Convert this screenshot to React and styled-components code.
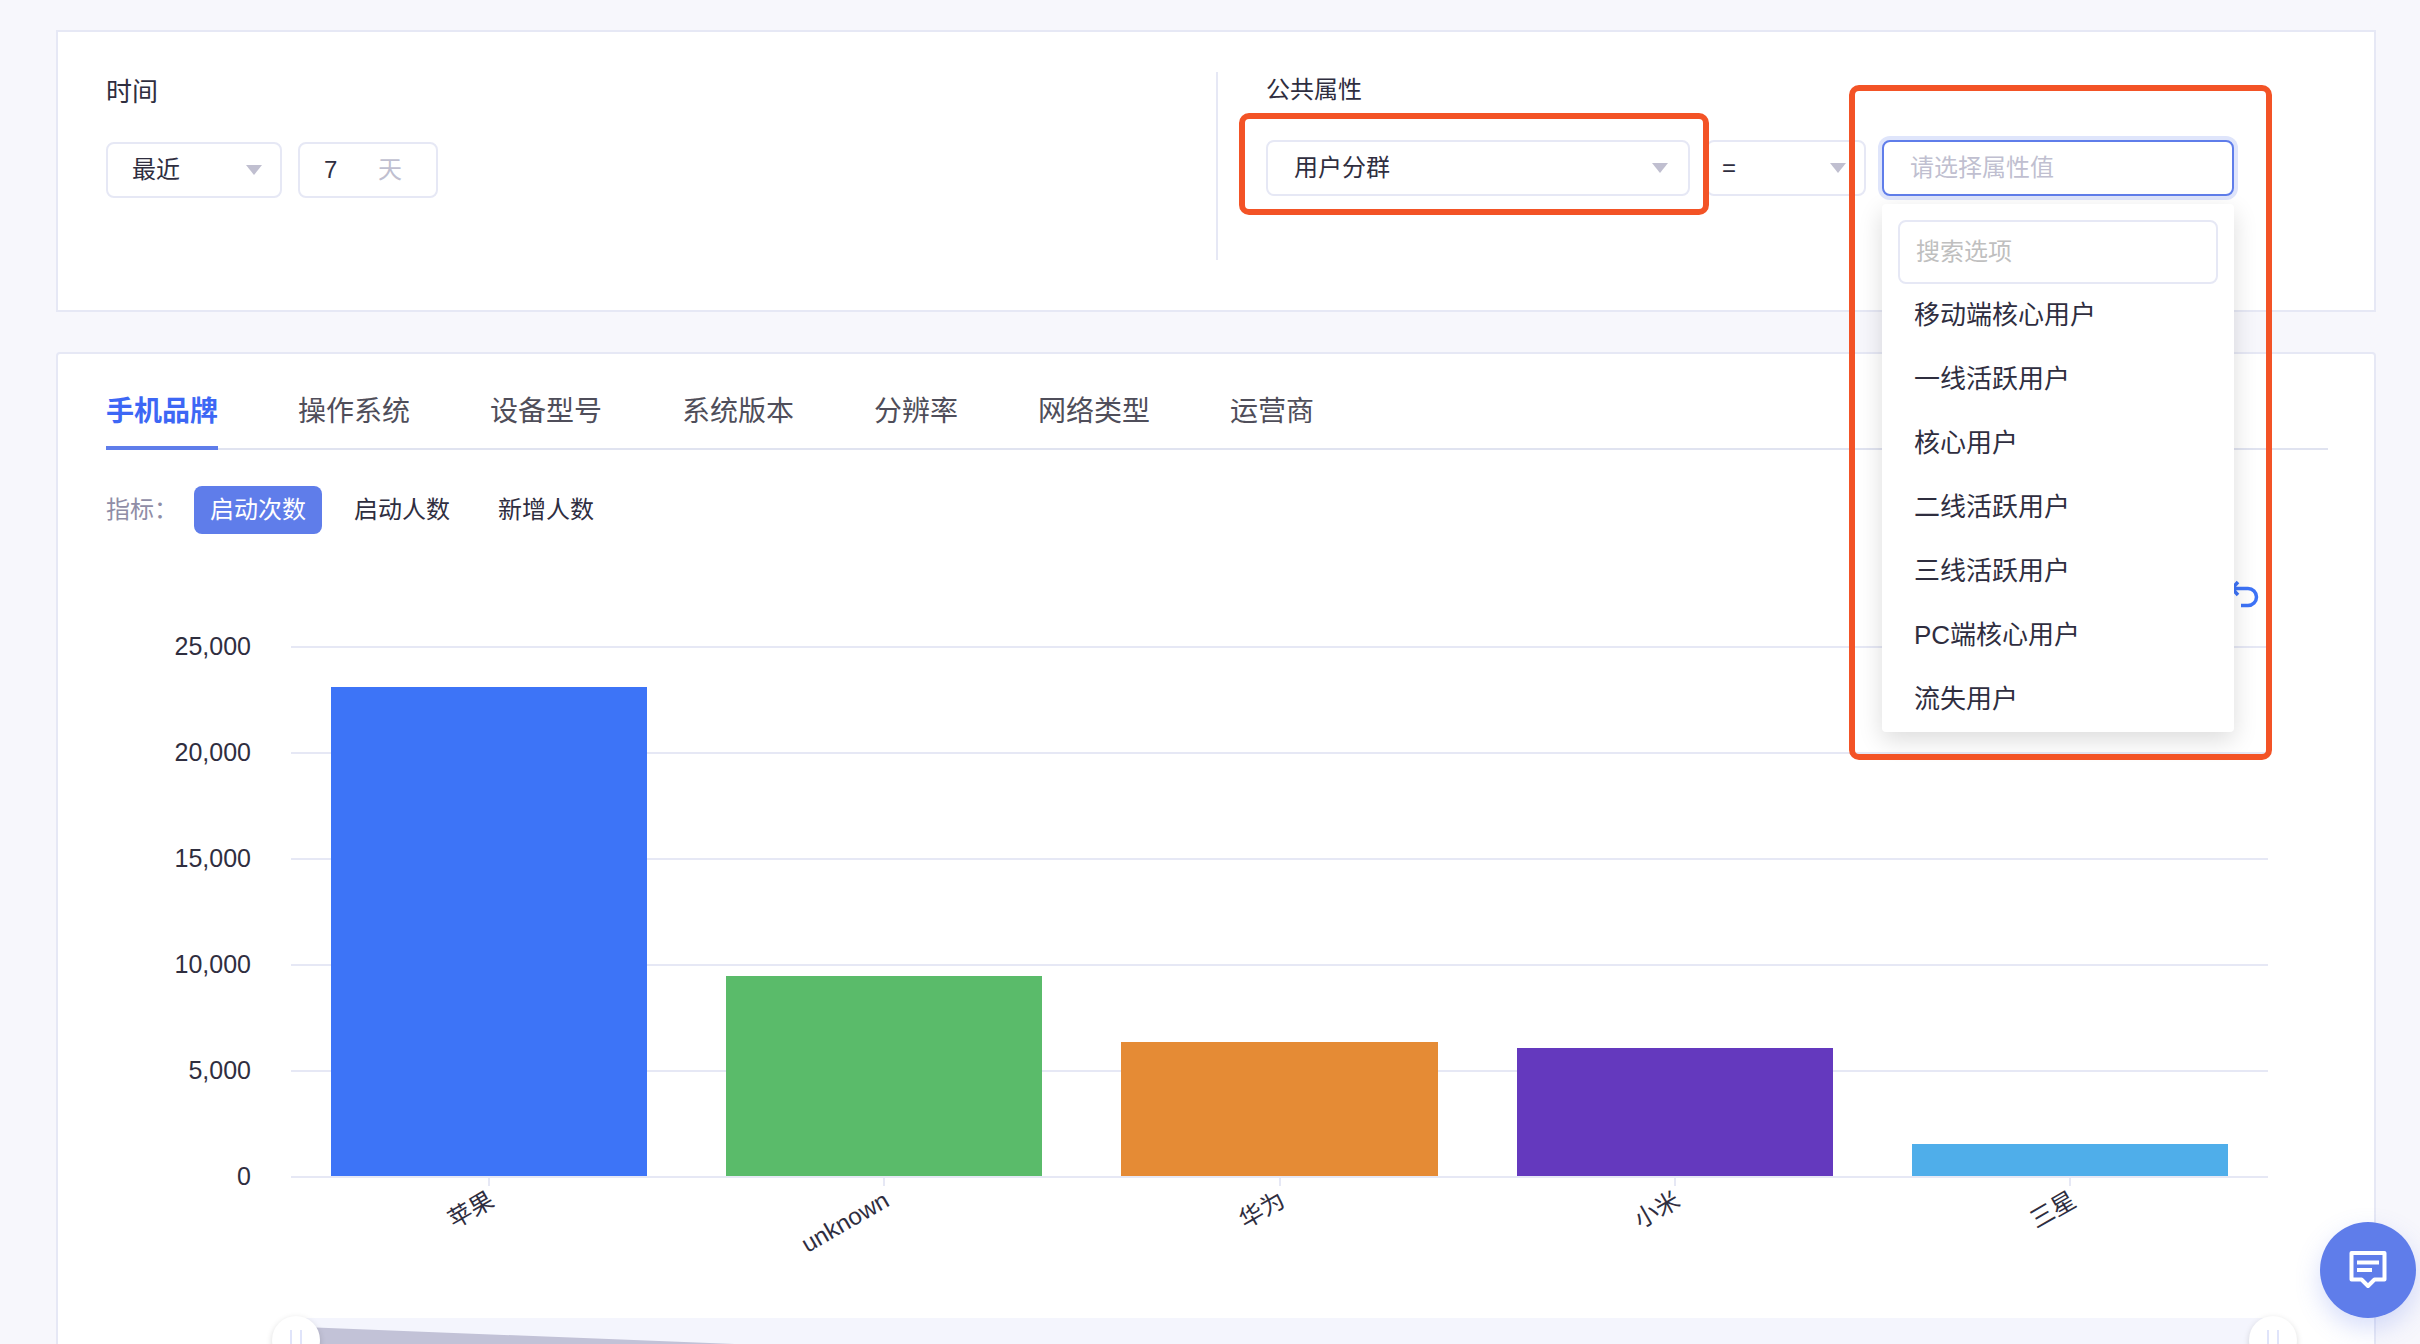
import React, { useState } from "react";
import styled, { createGlobalStyle } from "styled-components";

const font = `"Liberation Sans", "Noto Sans CJK SC", sans-serif`;
const c = {
  bg: "#f7f7fc",
  line: "#e6e8f5",
  text: "#2f2e3f",
  muted: "#c0bfd0",
  primary: "#5f7dea",
  link: "#3d67f5",
  mark: "#f35326",
};

const GlobalStyle = createGlobalStyle`
  * { box-sizing: border-box; }
  body { margin: 0; background: ${c.bg}; color: ${c.text}; font: 24px/36px ${font}; }
  button, input, select { font: inherit; color: inherit; margin: 0; }
`;

const Page = styled.main`
  height: 100vh;
  overflow: hidden;
  padding: 30px 44px 0 56px;
  display: flex;
  flex-direction: column;
  gap: 40px;
`;

const Card = styled.section`
  flex: none;
  background: #fff;
  border: 2px solid ${c.line};
  border-radius: ${(p) => p.$radius || 0}px;
`;

const Filters = styled(Card)`
  display: flex;
  gap: 2px;
  padding: 40px 0 50px;
`;

const FilterGroup = styled.div`
  flex: 1;
  min-height: 188px;
  padding: ${(p) => (p.$divided ? 0 : 2)}px 0 0 48px;
  border-left: ${(p) => (p.$divided ? `2px solid ${c.line}` : "0")};
`;

const GroupTitle = styled.h2`
  margin: 0 0 32px;
  font-size: ${(p) => p.$size}px;
  font-weight: 400;
  line-height: 36px;
`;

const Fields = styled.div`
  display: flex;
  gap: 16px;
`;

const Field = styled.div`
  position: relative;
  width: ${(p) => p.$width}px;
  height: 56px;
`;

const Caret = styled.svg`
  position: absolute;
  right: ${(p) => p.$right}px;
  top: 23px;
  width: 16px;
  height: 10px;
  fill: ${c.muted};
  pointer-events: none;
`;

const SelectBox = styled.select`
  appearance: none;
  width: 100%;
  height: 100%;
  padding: 0 40px 0 ${(p) => p.$pad}px;
  border: 2px solid ${c.line};
  border-radius: 8px;
  background: #fff;
  outline: none;
`;

const DayBox = styled.label`
  display: flex;
  align-items: center;
  width: 140px;
  height: 56px;
  padding: 0 34px 0 24px;
  border: 2px solid ${c.line};
  border-radius: 8px;
  color: ${c.muted};
`;

const DayInput = styled.input`
  flex: 1;
  min-width: 0;
  padding: 0;
  border: 0;
  outline: none;
  background: none;
  color: ${c.text};
`;

const ValueInput = styled.input`
  width: 100%;
  height: 100%;
  padding: 0 26px;
  border: 2px solid ${c.primary};
  border-radius: 8px;
  outline: none;
  box-shadow: 0 0 0 4px #dfe5fb;
  &::placeholder { color: ${c.muted}; opacity: 1; }
`;

const Dropdown = styled.div`
  position: absolute;
  z-index: 2;
  top: 64px;
  left: 0;
  right: 0;
  padding-top: 16px;
  background: #fff;
  border-radius: 4px;
  box-shadow: 0 8px 24px rgba(0, 0, 0, 0.14);
`;

const SearchInput = styled.input`
  display: block;
  width: calc(100% - 32px);
  height: 64px;
  margin: 0 16px;
  padding: 0 16px;
  border: 2px solid ${c.line};
  border-radius: 8px;
  outline: none;
  &::placeholder { color: #bfbfbf; opacity: 1; }
`;

const Options = styled.ul`
  list-style: none;
  margin: 0;
  padding: 0;
`;

const Option = styled.li`
  padding: 0 32px 2px;
  font-size: 26px;
  line-height: 62px;
  cursor: pointer;
`;

const Highlight = styled.div`
  position: absolute;
  z-index: 3;
  inset: ${(p) => p.$inset};
  border: 6px solid ${c.mark};
  border-radius: 10px;
  pointer-events: none;
`;

const Report = styled(Card)`
  padding: 38px 46px 60px 48px;
`;

const Tabs = styled.div`
  display: flex;
  gap: 80px;
  box-shadow: inset 0 -2px 0 #e0e3f0;
`;

const Tab = styled.button`
  padding: 0 0 14px;
  border: 0;
  border-bottom: 4px solid ${(p) => (p.$active ? c.primary : "transparent")};
  background: none;
  color: ${(p) => (p.$active ? c.link : "#4f4e5a")};
  font-size: 28px;
  font-weight: ${(p) => (p.$active ? 700 : 400)};
  line-height: 40px;
`;

const Metrics = styled.div`
  display: flex;
  align-items: center;
  gap: 16px;
  margin-top: 36px;
`;

const MetricLabel = styled.span`
  color: #8f8da6;
  width: 72px;
`;

const Metric = styled.button`
  height: 48px;
  padding: 0 16px;
  border: 0;
  border-radius: 8px;
  background: ${(p) => (p.$active ? c.primary : "none")};
  color: ${(p) => (p.$active ? "#fff" : c.text)};
`;

const Chart = styled.div`
  display: grid;
  grid-template-columns: 145px 1fr;
  column-gap: 40px;
  margin: 44px 60px 0 0;
`;

const ChartTools = styled.div`
  grid-column: 1 / -1;
  display: flex;
  justify-content: flex-end;
  padding: 0 8px 36px 0;
`;

const ToolButton = styled.button`
  display: block;
  width: 32px;
  height: 32px;
  padding: 0;
  border: 0;
  background: none;
  color: #3d73f7;
  svg { display: block; }
`;

const Scale = styled.div`
  margin-top: -53px;
  text-align: right;
  font-size: 25px;
  line-height: 106px;
`;

const Plot = styled.div`
  display: flex;
  height: 532px;
  background: repeating-linear-gradient(${c.line} 0 2px, transparent 2px 106px);
`;

const Slot = styled.div`
  flex: 1;
  display: flex;
  align-items: flex-end;
  justify-content: center;
  padding-bottom: 2px;
`;

const Bar = styled.div`
  width: 80%;
  background: ${(p) => p.$color};
`;

const Categories = styled.div`
  grid-column: 2;
  display: flex;
  height: 140px;
`;

const Category = styled.div`
  flex: 1;
  display: flex;
  flex-direction: column;
  align-items: center;
`;

const Tick = styled.i`
  width: 2px;
  height: 8px;
  background: ${c.line};
`;

const CategoryName = styled.span`
  align-self: flex-start;
  width: calc(50% - 4px);
  text-align: right;
  line-height: 28px;
  transform: rotate(-30deg);
  transform-origin: 100% 0;
`;

const Zoomer = styled.div`
  grid-column: 2;
  position: relative;
  height: 44px;
  background: #f4f5fd;
`;

const Preview = styled.svg`
  display: block;
  width: 100%;
  height: 44px;
`;

const Handle = styled.input`
  appearance: none;
  position: absolute;
  left: -19px;
  top: -2px;
  width: calc(100% + 48px);
  height: 48px;
  background: none;
  pointer-events: none;
  &::-webkit-slider-thumb {
    appearance: none;
    width: 48px;
    height: 48px;
    border-radius: 50%;
    pointer-events: auto;
    box-shadow: 0 2px 6px rgba(0, 0, 0, 0.15);
    background:
      linear-gradient(#e0e4fa, #e0e4fa) 18px 14px / 2px 20px no-repeat,
      linear-gradient(#e0e4fa, #e0e4fa) 28px 14px / 2px 20px no-repeat,
      #fff;
  }
`;

const ChatButton = styled.button`
  position: fixed;
  right: 4px;
  bottom: 26px;
  display: grid;
  place-items: center;
  width: 96px;
  height: 96px;
  padding: 0;
  border: 0;
  border-radius: 50%;
  background: ${c.primary};
  box-shadow: 0 10px 24px rgba(95, 125, 234, 0.25);
`;

const options = ["移动端核心用户", "一线活跃用户", "核心用户", "二线活跃用户", "三线活跃用户", "PC端核心用户", "流失用户"];
const tabs = ["手机品牌", "操作系统", "设备型号", "系统版本", "分辨率", "网络类型", "运营商"];
const metrics = ["启动次数", "启动人数", "新增人数"];
const scale = ["25,000", "20,000", "15,000", "10,000", "5,000", "0"];
const bars = [
  { name: "苹果", value: 23080, color: "#3d74f7" },
  { name: "unknown", value: 9450, color: "#5abb6a" },
  { name: "华为", value: 6310, color: "#e58b35" },
  { name: "小米", value: 6050, color: "#6439be" },
  { name: "三星", value: 1510, color: "#4faeea" },
];

function Select({ label, value, width, pad, caret = 20, children }) {
  return (
    <Field $width={width}>
      <SelectBox aria-label={label} defaultValue={value} $pad={pad}>
        <option>{value}</option>
      </SelectBox>
      <Caret $right={caret} viewBox="0 0 16 10"><path d="M0 0h16L8 10z" /></Caret>
      {children}
    </Field>
  );
}

export default function App() {
  const [tab, setTab] = useState(0);
  const [metric, setMetric] = useState(0);
  return (
    <Page>
      <GlobalStyle />
      <Filters>
        <FilterGroup>
          <GroupTitle $size={26}>时间</GroupTitle>
          <Fields>
            <Select label="时间" value="最近" width={176} pad={24} />
            <DayBox>
              <DayInput defaultValue="7" />
              天
            </DayBox>
          </Fields>
        </FilterGroup>
        <FilterGroup $divided>
          <GroupTitle $size={24}>公共属性</GroupTitle>
          <Fields>
            <Select label="公共属性" value="用户分群" width={424} pad={26} caret={22}>
              <Highlight $inset="-27px -19px -19px -27px" />
            </Select>
            <Select label="条件" value="=" width={160} pad={14} />
            <Field $width={352}>
              <ValueInput aria-label="属性值" placeholder="请选择属性值" readOnly />
              <Dropdown>
                <SearchInput aria-label="搜索选项" placeholder="搜索选项" />
                <Options role="listbox">
                  {options.map((o) => (
                    <Option key={o} role="option">{o}</Option>
                  ))}
                </Options>
              </Dropdown>
              <Highlight $inset="-55px -38px -564px -33px" />
            </Field>
          </Fields>
        </FilterGroup>
      </Filters>

      <Report $radius={4}>
        <Tabs role="tablist">
          {tabs.map((t, i) => (
            <Tab key={t} role="tab" $active={i === tab} onClick={() => setTab(i)}>{t}</Tab>
          ))}
        </Tabs>
        <Metrics>
          <MetricLabel>指标：</MetricLabel>
          {metrics.map((m, i) => (
            <Metric key={m} $active={i === metric} onClick={() => setMetric(i)}>{m}</Metric>
          ))}
        </Metrics>
        <Chart>
          <ChartTools>
            <ToolButton aria-label="还原">
              <svg width="32" height="32" viewBox="0 0 32 32" fill="none" stroke="currentColor" strokeWidth="3.5">
                <path d="M10 4L4 10.500l6 6.500M4 10.500h16a8.500 8.500 0 0 1 0 17h-7" />
              </svg>
            </ToolButton>
          </ChartTools>
          <Scale>
            {scale.map((s) => <div key={s}>{s}</div>)}
          </Scale>
          <div>
            <Plot>
              {bars.map((b) => (
                <Slot key={b.name}>
                  <Bar $color={b.color} style={{ height: `${(b.value / 25000) * 100}%` }} />
                </Slot>
              ))}
            </Plot>
            <Categories>
              {bars.map((b) => (
                <Category key={b.name}>
                  <Tick />
                  <CategoryName>{b.name}</CategoryName>
                </Category>
              ))}
            </Categories>
            <Zoomer>
              <Preview viewBox="0 0 400 44" preserveAspectRatio="none">
                <path d="M0 8.500L100 28L200 32L300 33L400 39V41H0z" fill="#c2c2d7" />
              </Preview>
              <Handle type="range" aria-label="起点" min="0" max="100" defaultValue="0" />
              <Handle type="range" aria-label="终点" min="0" max="100" defaultValue="100" />
            </Zoomer>
          </div>
        </Chart>
      </Report>

      <ChatButton aria-label="在线咨询">
        <svg width="40" height="40" viewBox="0 0 40 40" fill="none" stroke="#fff" strokeWidth="4">
          <path d="M3.500 3h33v26.500h-10L20 36l-6.500-6.500h-10z" strokeLinejoin="round" />
          <path d="M9 12.500h22M9 20h15" />
        </svg>
      </ChatButton>
    </Page>
  );
}
